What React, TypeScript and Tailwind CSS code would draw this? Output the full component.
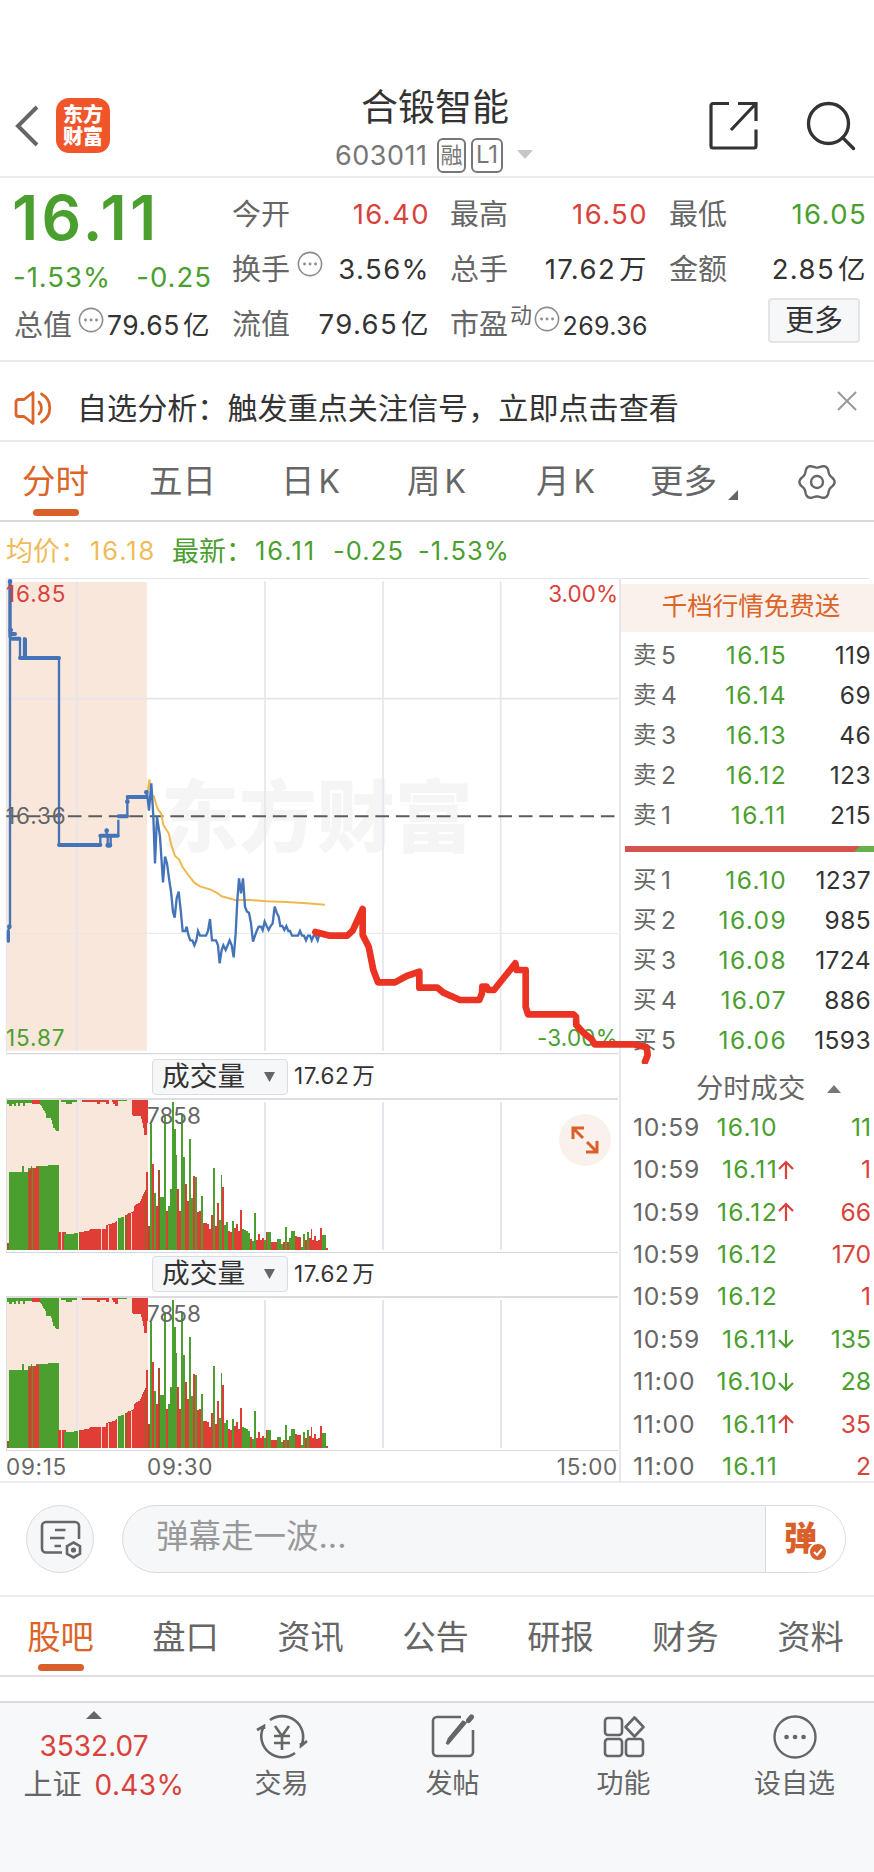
import { Search } from 'lucide-react'

const GRID = '#e4e6ec'
const GREEN = '#4a9f2f'
const RED = '#df3d35'
const BLUE = '#4573b8'

const PRICE_LINE =
  '441,668 447,722 454,640 460,740 465,880 471,740 480,800 489,937 495,860 501,880 507,925 513,965 519,1025 524,1043 530,985 536,965 542,1020 548,1083 556,1083 560,1070 565,1095 571,1111 577,1111 583,1126 589,1111 594,1083 600,1097 618,1097 624,1083 630,1047 636,1111 648,1111 654,1126 659,1180 665,1140 670,1126 677,1140 683,1126 689,1111 695,1126 701,1162 707,1090 712,990 717,925 723,970 729,925 735,1010 741,1025 747,1028 753,1060 759,1115 765,1097 770,1083 776,1070 783,1070 788,1080 794,1055 800,1068 806,1080 812,1068 818,1060 824,1010 830,1028 836,1040 841,1068 847,1068 853,1080 859,1068 865,1083 870,1083 876,1097 894,1097 900,1083 906,1097 912,1097 918,1111 924,1097 930,1097 935,1111 941,1097 947,1097 953,1111 959,1090 965,1085'

const AVG_LINE =
  '443,665 448,628 453,670 462,680 472,715 484,732 490,765 506,790 514,825 525,858 537,868 548,892 565,915 583,938 600,949 632,959 652,969 665,979 705,990 750,990 800,994 860,996 920,1000 975,1004'

const SKETCH_LINE =
  '946,1086 990,1097 1042,1097 1058,1082 1088,1017 1088,1095 1106,1130 1120,1200 1134,1237 1185,1237 1220,1218 1258,1205 1258,1253 1312,1253 1330,1268 1380,1290 1438,1290 1446,1270 1447,1250 1460,1250 1465,1260 1482,1260 1546,1180 1550,1200 1577,1200 1577,1310 1584,1333 1720,1333 1728,1340 1729,1365 1750,1388 1775,1408 1784,1423 1900,1423 1940,1432 1943,1455 1935,1475'

// one bar per minute from 09:30, colour letter + top of the bar
const MINUTES =
  'r392 b555 g248 r370 g455 r495 b388 g468 g468 g225 r510 g495 g443 g183 g265 g342 r443 r510 g222 g348 r430 r480 g293 g472 r405 g407 r513 r510 g465 r547 r545 r548 r563 r522 g380 r555 r487 g537 g403 r437 g553 g543 r570 r574 g540 r560 r548 r570 r507 g565 g567 g570 g577 r594 g600 g517 r597 r580 r597 r590 g597 r574 g574 g574 r602 r604 r604 g594 g594 g608 r604 g559 r604 g590 g570 g570 r584 r588 r588 g619 g580 r597 g573 r590 r564 r597 r584 r600 r597 r561 g582 g582 r622'.split(' ')

const BAR_COLORS: Record<string, string> = { r: RED, g: GREEN, b: '#a5502a' }

// six-lobed outline of the settings icon
const GEAR = Array.from({ length: 72 }, (_, i) => {
  const a = (i * Math.PI) / 36
  const r = 16 + 1.6 * Math.cos(6 * a)
  return `${(20 + r * Math.cos(a)).toFixed(2)},${(20 + r * Math.sin(a)).toFixed(2)}`
}).join(' ')

const sells = [
  ['卖', '5', '16.15', '119'],
  ['卖', '4', '16.14', '69'],
  ['卖', '3', '16.13', '46'],
  ['卖', '2', '16.12', '123'],
  ['卖', '1', '16.11', '215'],
]

const buys = [
  ['买', '1', '16.10', '1237'],
  ['买', '2', '16.09', '985'],
  ['买', '3', '16.08', '1724'],
  ['买', '4', '16.07', '886'],
  ['买', '5', '16.06', '1593'],
]

const trades = [
  { time: '10:59', price: '16.10', dir: '', vol: '11', up: false },
  { time: '10:59', price: '16.11', dir: 'up', vol: '1', up: true },
  { time: '10:59', price: '16.12', dir: 'up', vol: '66', up: true },
  { time: '10:59', price: '16.12', dir: '', vol: '170', up: true },
  { time: '10:59', price: '16.12', dir: '', vol: '1', up: true },
  { time: '10:59', price: '16.11', dir: 'down', vol: '135', up: false },
  { time: '11:00', price: '16.10', dir: 'down', vol: '28', up: false },
  { time: '11:00', price: '16.11', dir: 'up', vol: '35', up: true },
  { time: '11:00', price: '16.11', dir: '', vol: '2', up: true },
]

function InfoDot() {
  return (
    <svg viewBox="0 0 26 26" className="w-[26px] h-[26px] shrink-0" fill="none" stroke="#8d8d8d" strokeWidth="1.6">
      <circle cx="13" cy="13" r="11.6" />
      <path d="M7.5 13h.1M13 13h.1M18.5 13h.1" strokeWidth="2.8" strokeLinecap="round" />
    </svg>
  )
}

function Header() {
  return (
    <header className="h-[178px] pt-[74px] border-b-2 border-[#ececec] flex">
      <div className="w-[280px] flex pl-[14px] pt-[24px]">
        <svg viewBox="0 0 26 56" className="w-[26px] h-14" fill="none" stroke="#666" strokeWidth="4">
          <path d="M23 9L4 28L23 47" />
        </svg>
        <div className="ml-[16px] w-[54px] h-[55px] rounded-[13px] bg-[#f0562a] text-white text-center font-black text-[20px] leading-[22px] pt-[5px] font-['Noto_Sans_CJK_SC',sans-serif]">
          东方<br />财富
        </div>
      </div>
      <div className="w-[312px] flex flex-col items-center">
        <h1 className="text-[37px] leading-[68px] text-[#333] h-[62px] -ml-[2px]">合锻智能</h1>
        <div className="flex items-center h-[38px] text-[#777] ml-[-4px]">
          <span className="text-[27px] leading-none tracking-[0.5px] w-[102px]">603011</span>
          <span className="w-[29px] h-[35px] border-2 border-[#777] rounded-[6px] text-[22px] flex items-center justify-center leading-none">融</span>
          <span className="ml-[5px] w-[32px] h-[35px] border-2 border-[#777] rounded-[6px] text-[24px] flex items-center justify-center leading-none">L1</span>
          <svg viewBox="0 0 16 10" className="ml-[14px] w-4 h-[10px]" fill="#c6c6c6">
            <path d="M0 0H16L8 9z" />
          </svg>
        </div>
      </div>
      <div className="flex-1 flex pt-[26px] pl-[116px]">
        <svg viewBox="0 0 52 52" className="w-[52px] h-[52px]" fill="none" stroke="#333" strokeWidth="3.2">
          <path d="M21 3.5H5a2 2 0 0 0-2 2V46a2 2 0 0 0 2 2H46a2 2 0 0 0 2-2V29.5" />
          <path d="M30 3.5H48V21M47.5 4L23 30" />
        </svg>
        <Search className="ml-[41px] -mt-[4px] w-[60px] h-[60px] text-[#333]" strokeWidth={1.35} />
      </div>
    </header>
  )
}

function Quote() {
  return (
    <section className="h-[184px] border-b-2 border-[#ebebeb] flex text-[27.5px] leading-none text-[#333]">
      <div className="w-[196px] ml-[14px] flex flex-col whitespace-nowrap">
        <div className="h-[72px] pt-[10px] -ml-[2px] text-[62px] font-semibold leading-[60px] tracking-[3.4px] text-[#4a9f2f]">16.11</div>
        <div className="h-[55px] flex items-center justify-between text-[#4a9f2f] tracking-[1px] -ml-[1px] -mr-[2px]">
          <span>-1.53%</span>
          <span>-0.25</span>
        </div>
        <div className="h-[41px] flex items-center">
          <span className="text-[29px] text-[#666]">总值</span>
          <span className="-mt-3 ml-[6px]"><InfoDot /></span>
          <Value value="79.65亿" className="ml-auto text-[26.5px] tracking-[0.6px]" />
        </div>
      </div>
      <div className="w-[196px] ml-[22px] pt-[9px]">
        <Cell label="今开" value="16.40" color="text-[#d9423b]" />
        <Cell label="换手" value="3.56%" color="text-[#333]" info />
        <Cell label="流值" value="79.65亿" color="text-[#333]" />
      </div>
      <div className="w-[196px] ml-[22px] pt-[9px]">
        <Cell label="最高" value="16.50" color="text-[#d9423b]" />
        <Cell label="总手" value="17.62万" color="text-[#333]" />
        <div className="h-[55px] flex items-center">
          <span className="text-[29px] text-[#666]">市盈</span>
          <span className="text-[22px] text-[#666] -mt-5 ml-[2px]">动</span>
          <span className="-mt-3 ml-[2px]"><InfoDot /></span>
          <span className="ml-auto -mr-[2px] text-[25px] tracking-[0.4px] pt-1">269.36</span>
        </div>
      </div>
      <div className="w-[196px] ml-[23px] pt-[9px]">
        <Cell label="最低" value="16.05" color="text-[#4a9f2f]" />
        <Cell label="金额" value="2.85亿" color="text-[#333]" />
        <button className="ml-[99px] mt-[1px] w-[92px] h-[45px] rounded-[4px] border-2 border-[#e3e4e8] bg-[#f6f7f9] text-[29px] leading-none flex items-center justify-center">
          更多
        </button>
      </div>
    </section>
  )
}

function Value({ value, className }: { value: string; className: string }) {
  const unit = value.match(/[万亿]/)?.[0]
  return (
    <span className={className}>
      {value.replace(/[万亿]/, '')}
      {unit && <span className="ml-[3px]">{unit}</span>}
    </span>
  )
}

function Cell({ label, value, color, info }: { label: string; value: string; color: string; info?: boolean }) {
  return (
    <div className="h-[55px] flex items-center whitespace-nowrap">
      <span className="text-[29px] text-[#666]">{label}</span>
      {info && <span className="-mt-3 ml-[7px]"><InfoDot /></span>}
      <Value value={value} className={`ml-auto -mr-[2px] tracking-[1.4px] ${color}`} />
    </div>
  )
}

function Notice() {
  return (
    <section className="h-[80px] border-b-2 border-[#ebebeb] flex items-center pl-[14px] pt-[14px]">
      <svg viewBox="0 0 40 36" className="w-10 h-9" fill="none" stroke="#dc6428" strokeWidth="2.8" strokeLinejoin="round" strokeLinecap="round">
        <path d="M19 2.5V33.5L10 26.5H4.5A2.5 2.5 0 0 1 2 24V12A2.5 2.5 0 0 1 4.5 9.5H10z" />
        <path d="M25 12a8.5 8.5 0 0 1 0 12M27.5 4a16 16 0 0 1 0 28" />
      </svg>
      <span className="ml-[23px] w-[602px] text-[30.1px] leading-none text-[#333] whitespace-nowrap">自选分析：触发重点关注信号，立即点击查看</span>
      <svg viewBox="0 0 20 20" className="ml-[158px] mb-[15px] w-5 h-5" fill="none" stroke="#999" strokeWidth="2">
        <path d="M1 1L19 19M19 1L1 19" />
      </svg>
    </section>
  )
}

function ChartTabs() {
  return (
    <nav className="h-[80px] border-b-2 border-[#d9d9d9] flex text-[33.5px] leading-none text-[#666] whitespace-nowrap">
      <div className="ml-[22px] w-[127px] text-[#dc6428] pt-[23px]">
        分时
        <div className="ml-[11px] mt-[10px] w-[46px] h-[7px] rounded-full bg-[#d9602a]" />
      </div>
      <div className="w-[132px] pt-[23px]">五日</div>
      <div className="w-[126px] pt-[23px]">日<span className="ml-1 text-[32px]">K</span></div>
      <div className="w-[129px] pt-[23px]">周<span className="ml-1 text-[32px]">K</span></div>
      <div className="w-[114px] pt-[23px]">月<span className="ml-1 text-[32px]">K</span></div>
      <div className="w-[78px] pt-[23px]">更多</div>
      <svg viewBox="0 0 10 10" className="mt-[48px] w-[10px] h-[10px]" fill="#666">
        <path d="M10 0V10H0z" />
      </svg>
      <svg viewBox="0 0 40 40" className="ml-[59px] mt-[20px] w-10 h-10" fill="none" stroke="#666" strokeWidth="2.4" strokeLinejoin="round">
        <polygon points={GEAR} />
        <circle cx="20" cy="20" r="6" />
      </svg>
    </nav>
  )
}

function PriceChart() {
  return (
    <div className="relative z-10 h-[477px] w-[619px]">
      <svg viewBox="0 24 1962 1431" className="w-[654px] h-[477px] max-w-none" fill="none">
        <text x="482" y="828" fontSize="234" fontWeight="900" fill="#f5f5f6" fontFamily="Noto Sans CJK SC">东方财富</text>
        <rect x="19" y="36" width="422" height="1406" fill="#f9e7dc" />
        <g stroke={GRID} strokeWidth="5">
          <path d="M230 34V1442M795 34V1442M1149 34V1442M1502 34V1442M19 386H1855" />
          <path d="M19 1090H1855M19 26V1450" strokeWidth="3" />
        </g>
        <path d="M19 26H1855" stroke="#dfe2ea" strokeWidth="3" />
        <path d="M19 1451H1855" stroke="#d6d8de" strokeWidth="4" />
        <path d="M19 739H1855" stroke="#5c5c5c" strokeWidth="6" strokeDasharray="41 20.5" />
        <polyline points={AVG_LINE} stroke="#efb74e" strokeWidth="6" />
        <g stroke={BLUE} strokeLinejoin="round" strokeLinecap="round">
          <path d="M25 1115V1080L30 1068V34V205H60V262H72V205M177 264V825M301 825V797H320V780M323 825V797M332 825V797M355 797V752M382 738V681M441 681V664" strokeWidth="7" />
          <path d="M25 1112V1085M30 34V200" strokeWidth="10" />
          <path d="M35 206H58M35 192H45M60 264H177M177 825H301M301 797H353M356 739H381M383 681H439M75 208V262" strokeWidth="12" />
          <path d="M30 34H30.1M32 180H32.1M320 782H320.1M439 667H439.1M382 695H382.1M28 1070H28.1M323 826H330" strokeWidth="14" />
        </g>
        <polyline points={PRICE_LINE} stroke={BLUE} strokeWidth="7" />
      </svg>
      <span className="absolute left-[6px] top-[5px] text-[22.5px] leading-[22px] tracking-[0.9px] text-[#d9423b]">16.85</span>
      <span className="absolute left-[6px] top-[227px] text-[22.5px] leading-[22px] tracking-[0.9px] text-[#666]">16.36</span>
      <span className="absolute left-[6px] top-[449px] text-[22.5px] leading-[22px] tracking-[0.9px] text-[#4a9f2f]">15.87</span>
      <span className="absolute right-[1px] top-[5px] text-[22.5px] leading-[22px] text-[#d9423b]">3.00%</span>
      <span className="absolute right-[1px] top-[449px] text-[22.5px] leading-[22px] tracking-[0.2px] text-[#4a9f2f]">-3.00%</span>
      <svg viewBox="0 24 1962 1458" className="absolute left-0 top-0 w-[654px] h-[486px] max-w-none" fill="none">
        <polyline points={SKETCH_LINE} stroke="#ea3323" strokeWidth="20" strokeLinejoin="round" strokeLinecap="round" />
      </svg>
    </div>
  )
}

function VolumeHeader() {
  return (
    <div className="h-[45px] w-[612px] ml-[6px] border-b-2 border-[#dcdde1] flex items-center text-[#333]">
      <div className="ml-[146px] w-[136px] h-[36px] rounded-[4px] border border-[#d9dce2] bg-[#f6f7f9] flex items-center text-[27.7px] leading-none">
        <span className="ml-[9px] w-[84px] whitespace-nowrap">成交量</span>
        <svg viewBox="0 0 10 9" className="ml-[18px] w-[11px] h-[10px]" fill="#666">
          <path d="M0 0H10L5 9z" />
        </svg>
      </div>
      <span className="ml-[6px] text-[22.5px] leading-none tracking-[0.5px]">17.62<span className="ml-[3px]">万</span></span>
    </div>
  )
}

function VolumeChart() {
  return (
    <div className="relative h-[152.5px] w-[618px]">
      <svg viewBox="0 177 1854 459" className="w-[618px] h-[153px]" shapeRendering="crispEdges">
        <rect x="19" y="177" width="425" height="449" fill="#f9e7dc" />
        <path d="M230 182V626M795 182V626M1149 182V626M1502 182V626" stroke={GRID} strokeWidth="5" />
        <path d="M20 177V636" stroke="#dcdfe6" strokeWidth="3" />
        <path d="M19 634H1854" stroke="#d6d8de" strokeWidth="4" />
        <g fill={GREEN}>
          <path d="M20 177H96V186H75V195H70V186H60V195H54V187H47V195H41V188H36V195H27V190H20z" />
          <path d="M120 177H177V270H168L165 262H160L156 242L152 232H140L136 214L130 207L126 195L120 190z" />
          <path d="M184 177H230V184H216V190H198V184H184zM355 177H380V181H355z" />
          <path d="M26 626V394H67V374H73V392H85V382H92V376H97V382H108V374H120V375H145V371H165V373H177V626z" />
          <path d="M193 626V580H222V577H233V626zM355 626V532L372 526V626z" />
        </g>
        <g fill={RED}>
          <path d="M96 177H120V188H96zM246 177H326V190H318V182H300V188H290V184H275V182H246zM336 177H355V195H345V190H340z" />
          <path d="M396 177H444V246L440 247V281H431V262L426 240L422 224H400L396 220z" />
          <path d="M85 626V390H92V380H97V626zM99 626V382H108V378H118V626z" />
          <path d="M173 626V574H199V626z" />
          <path d="M236 626V574L266 569L272 564H318V552L345 545L352 538V626z" />
          <path d="M380 626V519L400 512L404 492L418 486L426 470L432 455L441 440V626z" />
        </g>
        <path d="M193 626V580H222V577H233V626z" fill={GREEN} />
        <path d="M20 626V605H26V626zM88 626V386H93V626zM236 626V574H241V626zM374 626V522H382V626zM434 626V450H438V626z" fill="#8d6420" />
        <path d="M184 574V626M305 564V626M325 552V626M394 516V626" stroke="#f9d9cc" strokeWidth="3" />
        {MINUTES.map((m, i) => (
          <rect
            key={i}
            x={438.5 + i * 5.87}
            y={Number(m.slice(1))}
            width="5.87"
            height={626 - Number(m.slice(1))}
            fill={BAR_COLORS[m[0]]}
          />
        ))}
      </svg>
      <span className="absolute left-[147px] top-[5px] text-[22.5px] leading-[22px] text-[#666]">7858</span>
    </div>
  )
}

function BookRow({ row }: { row: string[] }) {
  return (
    <div className="h-[40px] flex items-center leading-none text-[24.5px] tracking-[0.4px]">
      <span className="w-[28px] text-[23.5px] text-[#666]">{row[0]}</span>
      <span className="w-[20px] text-[#666]">{row[1]}</span>
      <span className="w-[106px] text-right tracking-[1.4px] text-[#4a9f2f]">{row[2]}</span>
      <span className="w-[84px] text-right text-[#333]">{row[3]}</span>
    </div>
  )
}

function OrderBook() {
  return (
    <aside className="w-[255px] border-l-2 border-[#e6e8ee]">
      <div className="h-[6px] w-[248px] border-t border-[#dfe2ea]" />
      <div className="h-[48px] bg-[#fbf1ec] text-[#dc6428] text-[25.5px] leading-none flex items-center justify-center pl-[7px] pb-[5px]">千档行情免费送</div>
      <div className="pl-[12px] pt-[3px]">
        {sells.map((row) => <BookRow key={row[1]} row={row} />)}
      </div>
      <svg viewBox="0 0 249 6" className="ml-1 mt-[11px] w-[249px] h-[6px]">
        <rect width="249" height="6" fill="#d4534d" />
        <path d="M235 0H249V6H229z" fill="#66b14b" />
      </svg>
      <div className="pl-[12px] pt-[8px]">
        {buys.map((row) => <BookRow key={row[1]} row={row} />)}
      </div>
      <div className="h-[46px] pt-[11px] flex items-center pl-[75px] text-[27.3px] leading-none text-[#666]">
        分时成交
        <svg viewBox="0 0 14 8" className="ml-[22px] w-[14px] h-2" fill="#777">
          <path d="M7 0L14 8H0z" />
        </svg>
      </div>
      <div className="pl-[12px]">
        {trades.map((t, i) => (
          <div key={i} className="h-[42.4px] flex items-center leading-none text-[24.7px]">
            <span className="w-[70px] tracking-[0.8px] text-[#666]">{t.time}</span>
            <span className="w-[75px] text-right tracking-[1.3px] text-[#4a9f2f]">{t.price}</span>
            <span className="w-[17px]">
              {t.dir === 'up' && (
                <svg viewBox="0 0 16 20" className="w-4 h-5" fill="none" stroke="#d9423b" strokeWidth="2.2">
                  <path d="M8 19V2M1 9L8 2L15 9" />
                </svg>
              )}
              {t.dir === 'down' && (
                <svg viewBox="0 0 16 20" className="w-4 h-5" fill="none" stroke={GREEN} strokeWidth="2.2">
                  <path d="M8 1V18M1 11L8 18L15 11" />
                </svg>
              )}
            </span>
            <span className={`w-[76px] text-right ${t.up ? 'text-[#d9423b]' : 'text-[#4a9f2f]'}`}>{t.vol}</span>
          </div>
        ))}
      </div>
    </aside>
  )
}

function DanmuBar() {
  return (
    <section className="h-[114px] border-b-2 border-[#ededed] flex items-center pl-[26px] leading-none">
      <div className="w-[68px] h-[68px] rounded-full bg-[#f6f7f9] border border-[#d8dade] flex items-center justify-center">
        <svg viewBox="0 0 44 40" className="w-11 h-10" fill="none" stroke="#666" strokeWidth="2.6">
          <path d="M24 33.5H8a4 4 0 0 1-4-4V7a4 4 0 0 1 4-4H37a4 4 0 0 1 4 4V20" />
          <path d="M17 11H27.5M12 19H26.5M16.5 27H23" />
          <path d="M35.5 23.5L42 27.2V34.8L35.5 38.5L29 34.8V27.2z" />
          <circle cx="35.5" cy="31" r="1.3" />
        </svg>
      </div>
      <div className="ml-[28px] w-[724px] h-[68px] rounded-full border border-[#d8dade] bg-[#f6f7f9] flex overflow-hidden">
        <span className="w-[642px] pl-[33px] pt-[15px] text-[32.5px] text-[#999]">弹幕走一波...</span>
        <div className="flex-1 border-l border-[#d8dade] bg-white relative">
          <span className="absolute left-[18px] top-[16px] text-[33px] font-black text-[#d9602a]">弹</span>
          <svg viewBox="0 0 20 20" className="absolute left-[42px] top-[36px] w-5 h-5">
            <circle cx="10" cy="10" r="9" fill="#d9602a" stroke="#fff" strokeWidth="2" />
            <path d="M6 10L9 13L14 7" fill="none" stroke="#fff" strokeWidth="2" />
          </svg>
        </div>
      </div>
    </section>
  )
}

function InfoTabs() {
  return (
    <nav className="h-[80px] border-b-2 border-[#e0e0e0] flex text-[33.3px] leading-none text-[#666]">
      {['股吧', '盘口', '资讯', '公告', '研报', '财务', '资料'].map((tab, i) => (
        <div key={tab} className={`w-[125px] pt-[24px] flex flex-col items-center ${i === 0 ? '-ml-[2px] text-[#dc6428]' : ''}`}>
          {tab}
          {i === 0 && <div className="mt-[10px] ml-[1px] w-[46px] h-[7px] rounded-full bg-[#d9602a]" />}
        </div>
      ))}
    </nav>
  )
}

function BottomBar() {
  return (
    <footer className="mt-[24px] h-[171px] border-t-2 border-[#d9dae0] bg-[#f7f8fa] flex text-[27px] leading-none text-[#666]">
      <div className="w-[196px] flex flex-col items-center pr-[8px] pt-[8px]">
        <svg viewBox="0 0 16 8" className="w-4 h-2" fill="#666">
          <path d="M8 0L16 8H0z" />
        </svg>
        <span className="mt-[13px] text-[28px] text-[#d9423b]">3532.07</span>
        <div className="mt-[10px] flex items-center text-[29px] pl-[20px] whitespace-nowrap">
          上证<span className="ml-[13px] text-[28px] tracking-[0.4px] text-[#d9423b]">0.43%</span>
        </div>
      </div>
      <div className="w-[171px] flex flex-col items-center pt-[10px]">
        <svg viewBox="0 0 52 48" className="w-[52px] h-12" fill="none" stroke="#666" strokeWidth="2.6">
          <path d="M14 7A21 21 0 0 1 46 31M39 40A21 21 0 0 1 7 15M1 17L8 13V16M51 28L45 33V30" />
          <path d="M19 13L26 23L33 13M18 23H34M18 30H34M26 23V37" />
        </svg>
        <span className="mt-[9px]">交易</span>
      </div>
      <div className="w-[171px] flex flex-col items-center pt-[10px]">
        <svg viewBox="0 0 44 48" className="w-11 h-12" fill="none" stroke="#666" strokeWidth="2.6">
          <path d="M30 4H6a4 4 0 0 0-4 4V39a4 4 0 0 0 4 4H38a4 4 0 0 0 4-4V17" />
          <path d="M34 10L18 29L16 31L18 26L32 9z" strokeWidth="2.8" />
          <path d="M37.5 7.5L40.5 4" strokeWidth="5" strokeLinecap="round" />
        </svg>
        <span className="mt-[9px]">发帖</span>
      </div>
      <div className="w-[171px] flex flex-col items-center pt-[10px]">
        <svg viewBox="0 0 44 48" className="w-11 h-12" fill="none" stroke="#666" strokeWidth="2.6" strokeLinejoin="round">
          <rect x="3" y="5" width="17" height="17" rx="3" />
          <rect x="3" y="26" width="17" height="17" rx="3" />
          <rect x="24" y="26" width="17" height="17" rx="3" />
          <path d="M32.5 4.5L41.5 14L32.5 23.5L23.5 14z" />
        </svg>
        <span className="mt-[9px]">功能</span>
      </div>
      <div className="w-[164px] flex flex-col items-center pt-[10px] pl-[7px]">
        <svg viewBox="0 0 48 48" className="w-12 h-12" fill="none" stroke="#666" strokeWidth="2.4">
          <circle cx="24" cy="24" r="20.5" />
          <path d="M15.5 24h.1M24 24h.1M32.5 24h.1" strokeWidth="4.6" strokeLinecap="round" />
        </svg>
        <span className="mt-[9px]">设自选</span>
      </div>
    </footer>
  )
}

export default function App() {
  return (
    <div className="w-[874px] h-[1872px] overflow-hidden bg-white font-['Inter','Noto_Sans_CJK_SC',sans-serif]">
      <Header />
      <Quote />
      <Notice />
      <ChartTabs />

      <div className="h-[56px] pt-[2px] flex items-center pl-[6px] text-[25.5px] leading-none tracking-[1.1px] text-[#4a9f2f] whitespace-nowrap">
        <span className="w-[84px] text-[27px] tracking-normal text-[#efbb59]">均价：</span>
        <span className="w-[82px] tracking-[1.9px] text-[#efbb59]">16.18</span>
        <span className="w-[83px] text-[27px] tracking-normal">最新：</span>
        <span className="w-[78px] tracking-[2px]">16.11</span>
        <span className="w-[85px]">-0.25</span>
        <span>-1.53%</span>
      </div>

      <main className="flex h-[905px] border-b-2 border-[#ececec]">
        <div className="w-[619px] relative">
          <PriceChart />
          <VolumeHeader />
          <VolumeChart />
          <VolumeHeader />
          <VolumeChart />
          <div className="flex pl-[6px] pr-[1px] pt-[5px] text-[22.5px] leading-[24px] tracking-[0.7px] text-[#666]">
            <span className="w-[141px]">09:15</span>
            <span>09:30</span>
            <span className="ml-auto">15:00</span>
          </div>
          <div className="absolute left-[559px] top-[536px] w-[52px] h-[52px] rounded-full bg-[#fbf1ec] flex items-center justify-center">
            <svg viewBox="0 0 28 28" className="w-7 h-7" fill="none" stroke="#d9602a" strokeWidth="3">
              <path d="M2 13V2H13M2 2L12 12M15 26H26V15M26 26L16 16" />
            </svg>
          </div>
        </div>
        <OrderBook />
      </main>

      <DanmuBar />
      <InfoTabs />
      <BottomBar />
    </div>
  )
}
